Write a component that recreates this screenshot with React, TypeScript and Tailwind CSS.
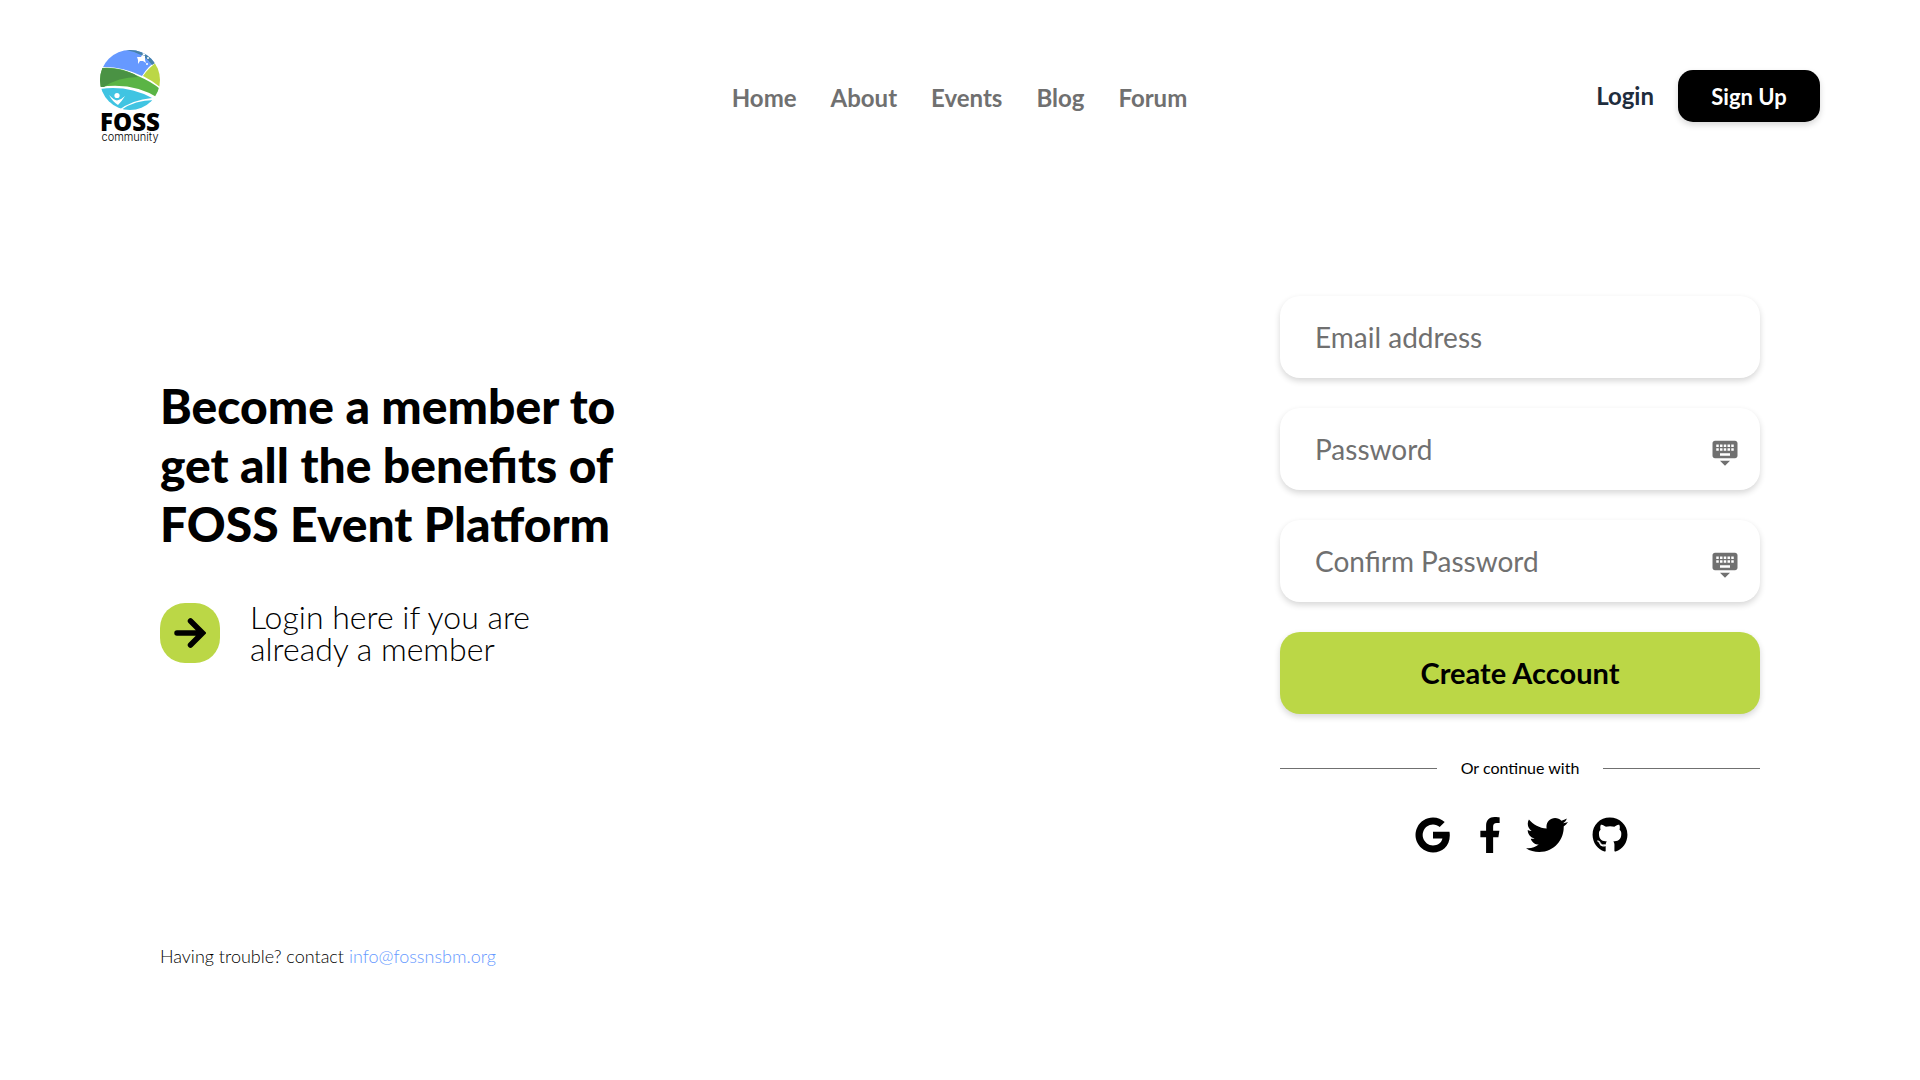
import type { ReactNode } from "react";
import { FaFacebookF, FaTwitter, FaGithub } from "react-icons/fa";
import { MdKeyboardHide } from "react-icons/md";
import { RiGoogleFill } from "react-icons/ri";

function Logo() {
  return (
    <a href="#" aria-label="FOSS community" className="flex w-[62px] flex-col items-center text-black">
      <svg viewBox="0 0 60 60" className="size-[60px]" aria-hidden="true">
        <defs>
          <clipPath id="globe">
            <circle cx="30" cy="30" r="30" />
          </clipPath>
        </defs>
        <g clipPath="url(#globe)">
          <rect width="60" height="60" fill="#fff" />
          <path d="M0 0H60V8Q48 16 42 26Q22 16 0 17Z" fill="#6699ff" />
          <path d="M26 0Q44 3 52 15L60 10V0Z" fill="#4682a9" />
          <path d="M60 10Q49 17 43 26Q53 31 60 37Z" fill="#bbd746" />
          <path d="M0 18Q20 16 38 26Q52 32 60 39V49Q34 32 0 37Z" fill="#5ab445" />
          <path d="M0 18Q18 17 34 24L38 27Q18 27 4 37L0 37Z" fill="#4a9244" />
          <path d="M0 39Q28 35 52 48Q32 50 19 60L0 60Z" fill="#40c4e2" />
          <path d="M21 60Q35 50 54 50L60 52V60Z" fill="#40c4e2" />
          <path d="M9 45Q14 50 17 50.500Q21 50 25 46Q22 51 18 55Q12 51 9 45Z" fill="#fff" />
          <circle cx="17" cy="45.500" r="2.600" fill="#fff" />
          <path d="M37 7l4 0 1-2 3 1 0 4 1 3-3-2-3 0-2 3 0-4z" fill="#fff" />
          <circle cx="44" cy="4" r="1.400" fill="#fff" />
          <circle cx="47" cy="14" r="1" fill="#fff" />
          <circle cx="48" cy="8" r="1" fill="#fff" />
        </g>
      </svg>
      <span className="mt-1 font-['Open_Sans'] text-2xl leading-4 font-extrabold">FOSS</span>
      <span className="mt-[3px] font-[Inter] text-[11px] leading-2 font-light">community</span>
    </a>
  );
}

function NavLink({ children }: { children: ReactNode }) {
  return (
    <a href="#" className="text-2xl font-bold">
      {children}
    </a>
  );
}

function Field({ label, type, icon }: { label: string; type: string; icon?: boolean }) {
  return (
    <div className="flex h-[82px] items-center rounded-[20px] bg-white pr-5 pl-[35px] shadow-[0_3px_6px_rgba(0,0,0,0.16)]">
      <input
        type={type}
        aria-label={label}
        placeholder={label}
        className="h-full min-w-0 flex-1 bg-transparent text-[28px] outline-none placeholder:text-[#707070]"
      />
      {icon && (
        <button type="button" aria-label="Show keyboard" className="mt-1.5 text-[#707070]">
          <MdKeyboardHide className="size-[30px]" />
        </button>
      )}
    </div>
  );
}

export default function App() {
  return (
    <div className="min-h-screen bg-white font-[Lato,sans-serif] text-black">
      <header className="grid grid-cols-[1fr_auto_1fr] items-start pt-[50px] pr-[100px] pl-[99px]">
        <Logo />
        <nav className="mt-8 flex gap-[34px] text-[#707070]">
          <NavLink>Home</NavLink>
          <NavLink>About</NavLink>
          <NavLink>Events</NavLink>
          <NavLink>Blog</NavLink>
          <NavLink>Forum</NavLink>
        </nav>
        <div className="mt-5 flex items-center justify-end gap-6">
          <a href="#" className="text-2xl font-bold text-[#1f2d3d]">
            Login
          </a>
          <button type="button" className="h-[52px] w-[142px] rounded-[15px] bg-black text-[22px] font-bold text-white shadow-[0_3px_6px_rgba(0,0,0,0.16)]">
            Sign Up
          </button>
        </div>
      </header>

      <main className="mt-[155px] flex justify-between px-40">
        <section className="pt-20">
          <h1 className="text-5xl leading-[59px] font-black">
            Become a member to
            <br />
            get all the benefits of
            <br />
            FOSS Event Platform
          </h1>
          <a href="#" className="mt-12 flex items-center gap-[30px]">
            <span className="flex size-[60px] items-center justify-center rounded-[25px] bg-[#bbd746]">
              <svg viewBox="0 0 32 30" className="h-[30px] w-8" aria-hidden="true">
                <path d="M3 15H27M16.500 3L28.500 15L16.500 27" fill="none" stroke="#000" strokeWidth="5.500" strokeLinecap="round" />
              </svg>
            </span>
            <span className="text-[32px] leading-8 font-light">
              Login here if you are
              <br />
              already a member
            </span>
          </a>
        </section>

        <form className="flex w-[480px] flex-col gap-[30px]">
          <Field label="Email address" type="email" />
          <Field label="Password" type="password" icon />
          <Field label="Confirm Password" type="password" icon />
          <button type="button" className="h-[82px] rounded-[20px] bg-[#bbd746] text-[29px] font-bold shadow-[0_3px_6px_rgba(0,0,0,0.16)]">
            Create Account
          </button>
          <div className="mt-3 flex items-center gap-6">
            <span className="h-px flex-1 bg-[#707070]" />
            <span className="text-base">Or continue with</span>
            <span className="h-px flex-1 bg-[#707070]" />
          </div>
          <div className="mt-1 flex items-center justify-center gap-6">
            <button type="button" aria-label="Google">
              <RiGoogleFill className="size-[42px]" />
            </button>
            <button type="button" aria-label="Facebook">
              <FaFacebookF className="h-9 w-6" />
            </button>
            <button type="button" aria-label="Twitter">
              <FaTwitter className="size-[42px]" />
            </button>
            <button type="button" aria-label="GitHub">
              <FaGithub className="size-9" />
            </button>
          </div>
        </form>
      </main>

      <footer className="mt-[86px] px-40 text-lg font-light">
        Having trouble? contact{" "}
        <a href="mailto:info@fossnsbm.org" className="text-[#6699ff]">
          info@fossnsbm.org
        </a>
      </footer>
    </div>
  );
}
